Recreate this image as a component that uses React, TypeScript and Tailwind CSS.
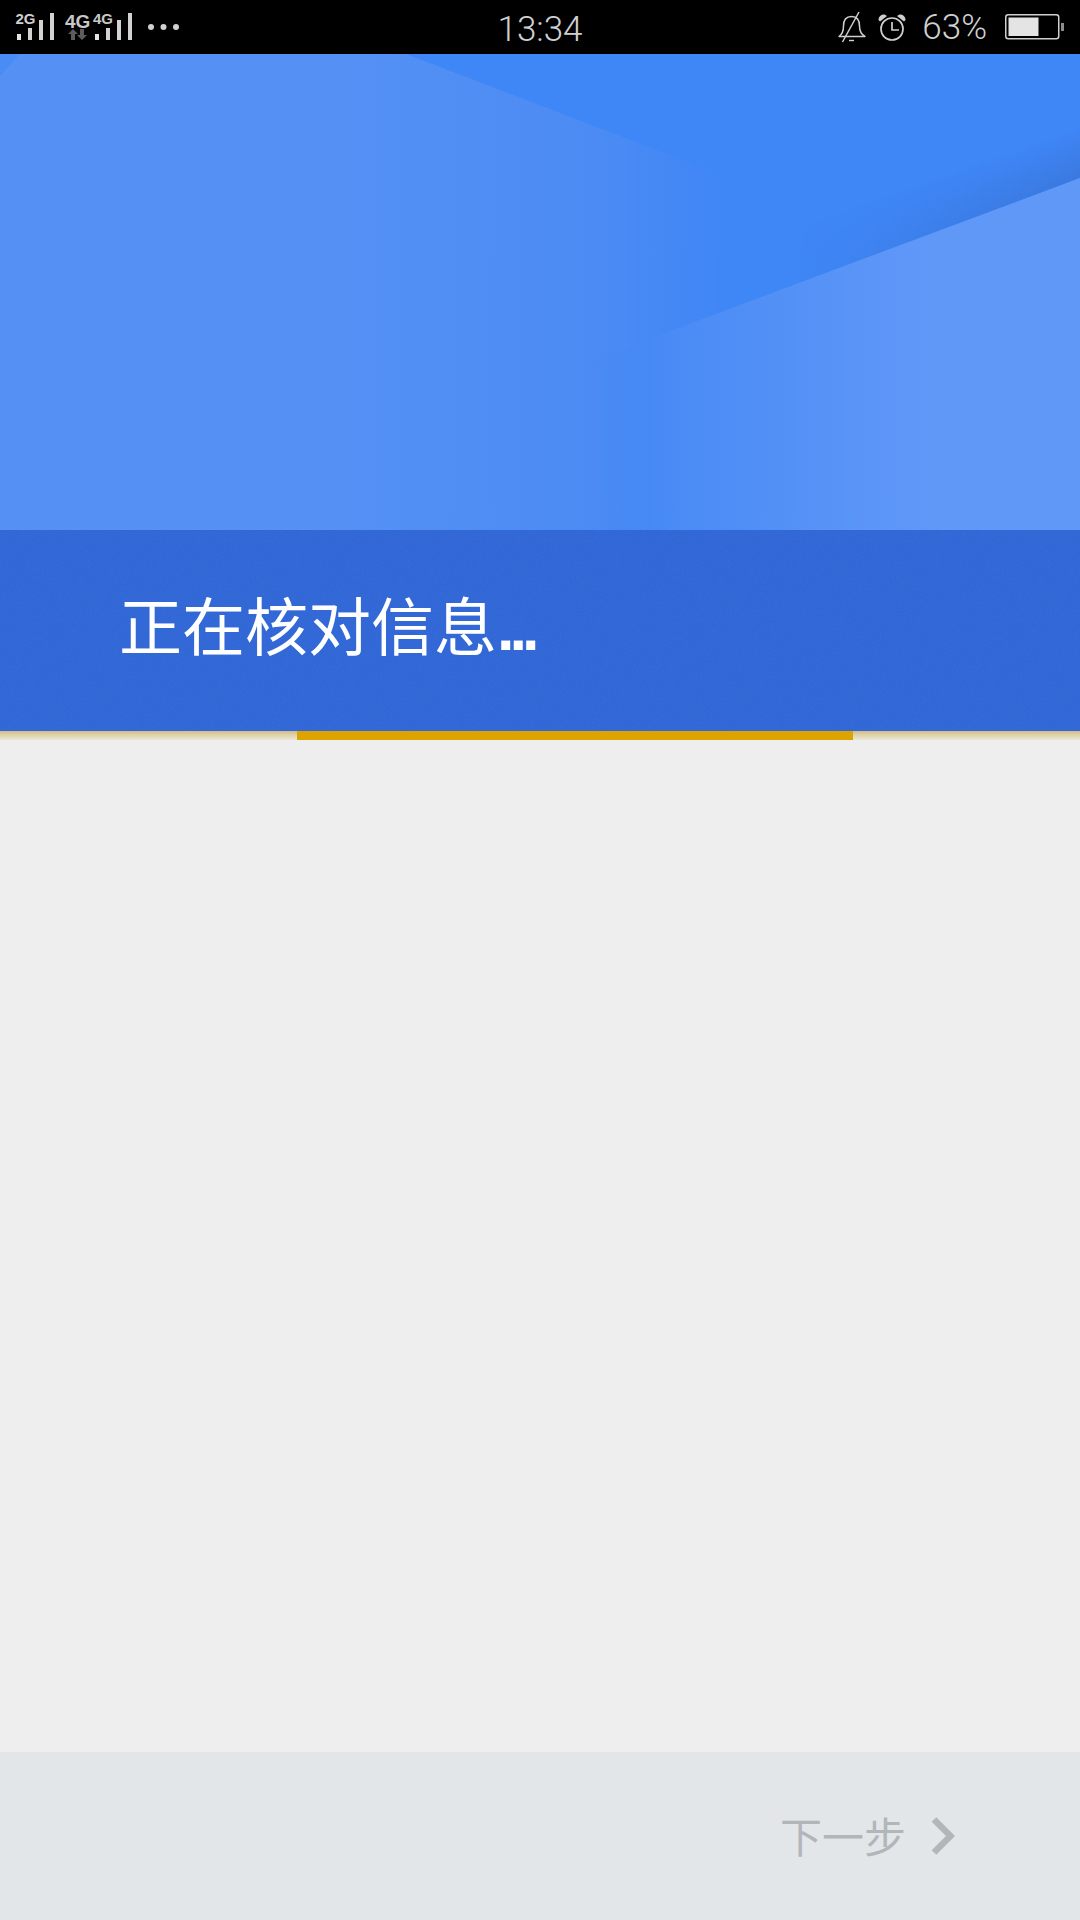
const cjk = "font-['Liberation_Sans','Noto_Sans_CJK_SC',sans-serif]"

function SignalBars({ x }: { x: number }) {
  return (
    <g fill="#d2d2d2">
      <rect x={x} y="34" width="4" height="6" fill="#e4e4e4" />
      <rect x={x + 11} y="28" width="4" height="12" />
      <rect x={x + 22} y="20" width="4" height="20" />
      <rect x={x + 33} y="13" width="4" height="27" />
    </g>
  )
}

function SignalCluster() {
  return (
    <svg width="190" height="54" viewBox="0 0 190 54" className="shrink-0">
      <text x="15.500" y="24" fontSize="15" fontWeight="700" fill="#cfcfcf" fontFamily="Liberation Sans">2G</text>
      <SignalBars x={17} />
      <text x="65" y="27.500" fontSize="19" fontWeight="700" fill="#c8c8c8" fontFamily="Liberation Sans">4G</text>
      <path d="M73 29l-5 5h3v6h4v-6h3zM82 40l5-5h-3v-6h-4v6h-3z" fill="#5c5c5c" />
      <text x="93" y="24" fontSize="15" fontWeight="700" fill="#c8c8c8" fontFamily="Liberation Sans">4G</text>
      <SignalBars x={95} />
      <circle cx="151" cy="27" r="3" fill="#d0d0d0" />
      <circle cx="163.500" cy="27" r="3" fill="#d0d0d0" />
      <circle cx="176" cy="27" r="3" fill="#d0d0d0" />
    </svg>
  )
}

function BellOff() {
  return (
    <svg width="28" height="32" viewBox="0 0 28 32" fill="none" stroke="#cfcfcf" strokeWidth="1.500" className="shrink-0">
      <path d="M1 25.500c3-2 4.500-5 4.500-10.500 0-6 3-9.500 8-9.500s8 3.500 8 9.500c0 5.500 2 8.500 5.500 10.500z" strokeLinejoin="round" />
      <path d="M21 1L4.500 31" />
      <path d="M11 29.500h5" strokeWidth="1.400" />
    </svg>
  )
}

function Alarm() {
  return (
    <svg width="28" height="27" viewBox="0 0 28 27" fill="none" stroke="#cfcfcf" strokeWidth="1.700" className="shrink-0">
      <circle cx="14" cy="15" r="11" />
      <path d="M14 8v8h7" />
      <path d="M0.500 6C0.500 2.500 3 0.500 6.500 0.500L9 2L2 7.500z" fill="#cfcfcf" stroke="none" />
      <path d="M27.500 6C27.500 2.500 25 0.500 21.500 0.500L19 2L26 7.500z" fill="#cfcfcf" stroke="none" />
    </svg>
  )
}

function Battery() {
  return (
    <svg width="59" height="26" viewBox="0 0 59 26" className="shrink-0">
      <rect x="0.750" y="0.750" width="53" height="24" rx="2.500" fill="none" stroke="#d0d0d0" strokeWidth="1.500" />
      <rect x="3.500" y="3.500" width="30" height="18.500" fill="#e4e4e4" />
      <rect x="56" y="9" width="3" height="8" fill="#8c8c8c" />
    </svg>
  )
}

function StatusBar() {
  return (
    <div className="h-[54px] bg-black flex items-center shrink-0">
      <div className="flex-1 flex items-center">
        <SignalCluster />
      </div>
      <span className="text-[35px] leading-none text-[#d0d0d0] font-['Roboto',sans-serif] font-light mt-[4px]">13:34</span>
      <div className="flex-1 flex items-center justify-end">
        <BellOff />
        <div className="w-[12px]" />
        <Alarm />
        <span className="text-[35px] leading-none text-[#d0d0d0] font-['Roboto',sans-serif] font-light ml-[16px] mr-[18px]">63%</span>
        <Battery />
        <div className="w-[16px]" />
      </div>
    </div>
  )
}

function HeroArt() {
  return (
    <svg viewBox="0 0 1080 476" width="1080" height="476" className="absolute inset-0">
      <defs>
        <linearGradient id="leftFade" gradientUnits="userSpaceOnUse" x1="330" y1="0" x2="730" y2="0">
          <stop offset="0" stopColor="#5591f5" />
          <stop offset="0.65" stopColor="#4c8bf3" />
          <stop offset="1" stopColor="#3f86f6" />
        </linearGradient>
        <linearGradient id="rightFade" gradientUnits="userSpaceOnUse" x1="590" y1="0" x2="930" y2="0">
          <stop offset="0" stopColor="#4487f4" stopOpacity="0" />
          <stop offset="0.25" stopColor="#4a8bf5" stopOpacity="1" />
          <stop offset="1" stopColor="#6098f8" />
        </linearGradient>
        <linearGradient id="edgeShade" gradientUnits="userSpaceOnUse" x1="984" y1="108" x2="1000" y2="154">
          <stop offset="0" stopColor="#3a78de" stopOpacity="0" />
          <stop offset="1" stopColor="#3a78de" />
        </linearGradient>
        <linearGradient id="edgeShadeFade" gradientUnits="userSpaceOnUse" x1="800" y1="0" x2="1080" y2="0">
          <stop offset="0" stopColor="#000" />
          <stop offset="1" stopColor="#fff" />
        </linearGradient>
        <mask id="edgeMask" maskUnits="userSpaceOnUse" x="0" y="0" width="1080" height="476">
          <rect width="1080" height="476" fill="url(#edgeShadeFade)" />
        </mask>
      </defs>
      <rect width="1080" height="476" fill="#3f86f6" />
      <polygon points="1080,124 1080,60 780,172 780,236" fill="url(#edgeShade)" mask="url(#edgeMask)" />
      <polygon points="0,0 406,0 735,126 735,476 0,476" fill="url(#leftFade)" />
      <polygon points="1080,124 590,307 590,476 1080,476" fill="url(#rightFade)" />
      <polygon points="0,0 20,0 0,22" fill="#4a8cf6" />
    </svg>
  )
}

function BandNoise() {
  return (
    <svg width="1080" height="201" className="absolute inset-0 opacity-[0.035]">
      <filter id="speckle">
        <feTurbulence type="fractalNoise" baseFrequency="0.8" numOctaves="2" />
        <feColorMatrix values="0 0 0 0 1  0 0 0 0 1  0 0 0 0 1  0 0 0 1.500 -0.400" />
      </filter>
      <rect width="1080" height="201" filter="url(#speckle)" />
    </svg>
  )
}

function ProgressLine() {
  const side = 'bg-gradient-to-b from-[#d3bd85] via-[#e2d5ae] to-[#ebe8d8]'
  return (
    <div className="h-[9px] flex shrink-0">
      <div className={`w-[297px] ${side}`} />
      <div className="w-[556px] bg-[#dda400]" />
      <div className={`flex-1 ${side}`} />
    </div>
  )
}

export default function App() {
  return (
    <div className="w-[1080px] h-[1920px] bg-[#eeeeee] flex flex-col overflow-hidden">
      <StatusBar />

      {/* Header */}
      <div className="relative h-[476px] shrink-0 overflow-hidden">
        <HeroArt />
      </div>
      <div className="relative h-[201px] shrink-0 bg-[#3066d6] flex items-start pl-[119px] pt-[55px]">
        <BandNoise />
        <span className={`relative text-[63px] leading-[86px] text-white whitespace-nowrap ${cjk}`}>
          正在核对信息<span className="font-bold tracking-[-5px]">...</span>
        </span>
      </div>
      <ProgressLine />

      <div className="flex-1" />

      {/* Footer */}
      <div className="h-[168px] shrink-0 bg-[#e2e6e9] flex items-center pl-[780px] pt-[5px]">
        <span className={`text-[42px] leading-none text-[#b2b6b9] ${cjk}`}>下一步</span>
        <svg width="24" height="38" viewBox="0 0 24 38" fill="none" stroke="#b2b6b9" strokeWidth="6.500" className="ml-[25px] -mt-[5px] shrink-0">
          <path d="M3 2.500L19.500 19L3 35.500" />
        </svg>
      </div>
    </div>
  )
}
